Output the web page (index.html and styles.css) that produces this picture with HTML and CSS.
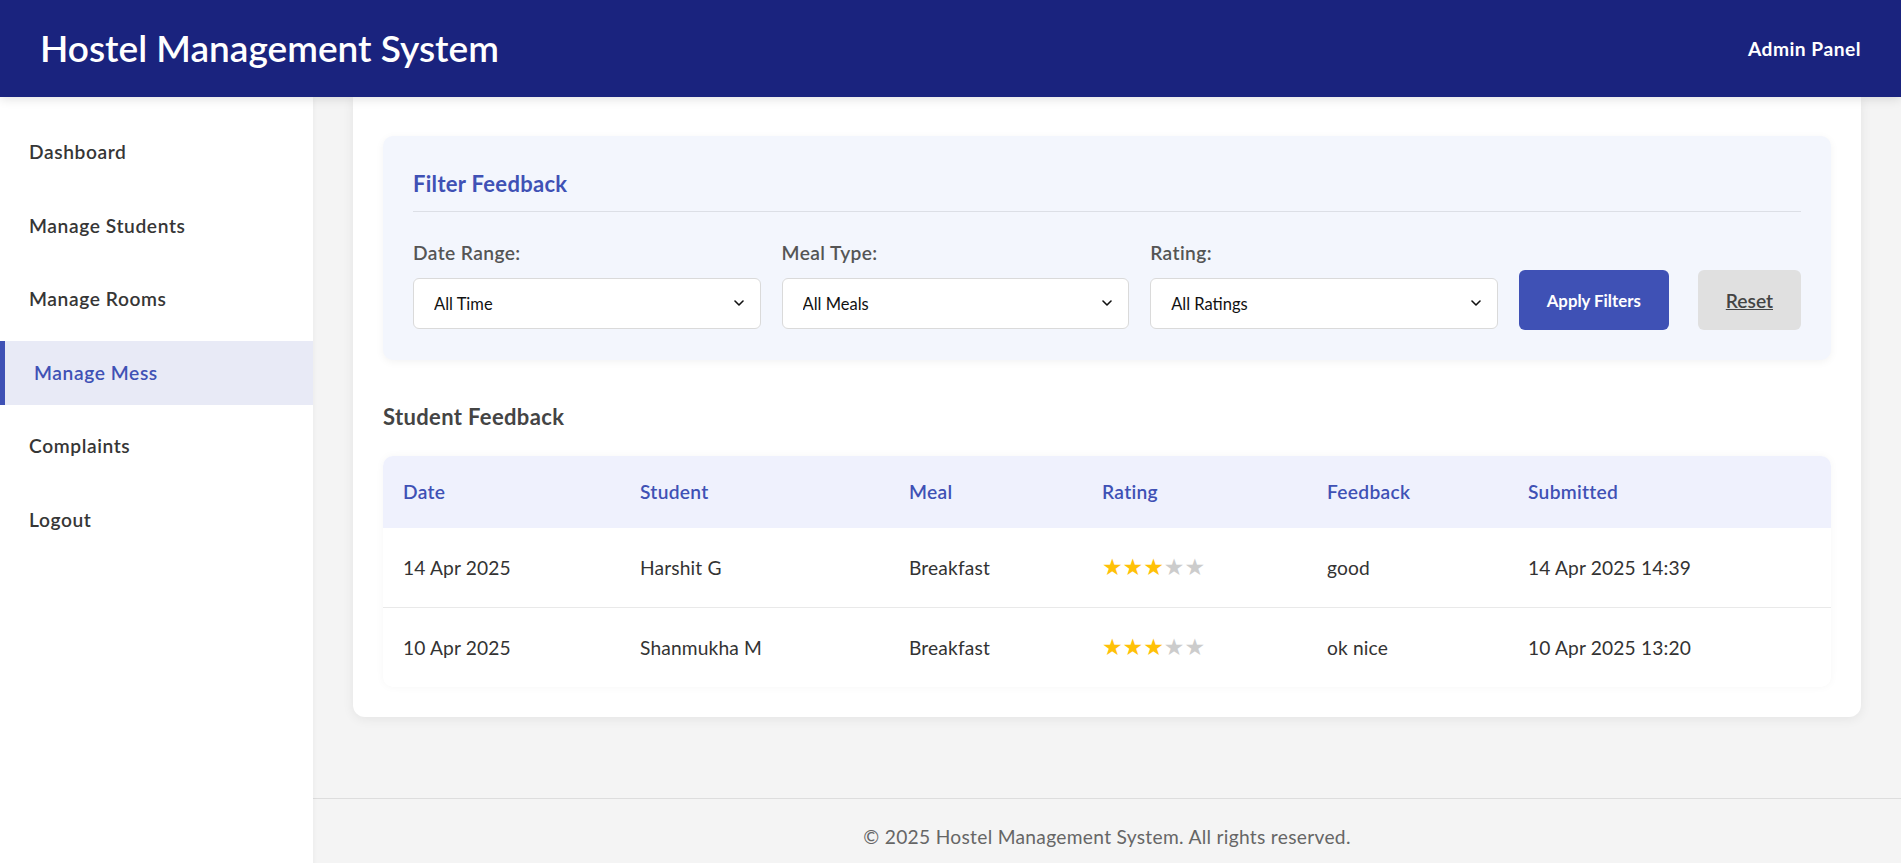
FILE: index.html
```html
<!DOCTYPE html>
<html lang="en">
<head>
<meta charset="utf-8">
<title>Manage Mess - Hostel Management System</title>
<link rel="stylesheet" href="styles.css">
</head>
<body>
<header class="topbar">
  <h1 class="brand">Hostel Management System</h1>
  <div class="role">Admin Panel</div>
</header>
<div class="layout">
  <nav class="sidebar">
    <a class="nav-item" href="#">Dashboard</a>
    <a class="nav-item" href="#">Manage Students</a>
    <a class="nav-item" href="#">Manage Rooms</a>
    <a class="nav-item active" href="#">Manage Mess</a>
    <a class="nav-item" href="#">Complaints</a>
    <a class="nav-item" href="#">Logout</a>
  </nav>
  <div class="main-col">
    <main class="content">
      <section class="card">
        <div class="filter-box">
          <h3 class="filter-title">Filter Feedback</h3>
          <div class="filter-row">
            <div class="filter-group">
              <label class="filter-label">Date Range:</label>
              <div class="select-wrap">
                <select class="select"><option>All Time</option><option>Today</option><option>This Week</option></select>
                <svg class="chev" width="10" height="6" viewBox="0 0 10 6"><path d="M1 1l4 4 4-4" fill="none" stroke="#111" stroke-width="1.6" stroke-linecap="round" stroke-linejoin="round"/></svg>
              </div>
            </div>
            <div class="filter-group">
              <label class="filter-label">Meal Type:</label>
              <div class="select-wrap">
                <select class="select"><option>All Meals</option><option>Breakfast</option><option>Lunch</option><option>Dinner</option></select>
                <svg class="chev" width="10" height="6" viewBox="0 0 10 6"><path d="M1 1l4 4 4-4" fill="none" stroke="#111" stroke-width="1.6" stroke-linecap="round" stroke-linejoin="round"/></svg>
              </div>
            </div>
            <div class="filter-group">
              <label class="filter-label">Rating:</label>
              <div class="select-wrap">
                <select class="select"><option>All Ratings</option><option>5 Stars</option><option>4 Stars</option></select>
                <svg class="chev" width="10" height="6" viewBox="0 0 10 6"><path d="M1 1l4 4 4-4" fill="none" stroke="#111" stroke-width="1.6" stroke-linecap="round" stroke-linejoin="round"/></svg>
              </div>
            </div>
            <button class="btn-apply" type="button">Apply Filters</button>
            <a class="btn-reset" href="#">Reset</a>
          </div>
        </div>

        <h3 class="section-title">Student Feedback</h3>
        <div class="table-wrap">
          <table class="fb-table">
            <colgroup>
              <col class="c-date"><col class="c-student"><col class="c-meal"><col class="c-rating"><col class="c-feedback"><col class="c-submitted">
            </colgroup>
            <thead>
              <tr><th>Date</th><th>Student</th><th>Meal</th><th>Rating</th><th>Feedback</th><th>Submitted</th></tr>
            </thead>
            <tbody>
              <tr>
                <td>14 Apr 2025</td><td>Harshit G</td><td>Breakfast</td>
                <td><span class="stars"><span class="on">★★★</span><span class="off">★★</span></span></td>
                <td>good</td><td>14 Apr 2025 14:39</td>
              </tr>
              <tr>
                <td>10 Apr 2025</td><td>Shanmukha M</td><td>Breakfast</td>
                <td><span class="stars"><span class="on">★★★</span><span class="off">★★</span></span></td>
                <td>ok nice</td><td>10 Apr 2025 13:20</td>
              </tr>
            </tbody>
          </table>
        </div>
      </section>
    </main>
    <footer class="footer">© 2025 Hostel Management System. All rights reserved.</footer>
  </div>
</div>
</body>
</html>
```
FILE: styles.css
```css
* { box-sizing: border-box; }

html, body {
  margin: 0;
  padding: 0;
}

body {
  font-family: "Lato", "Open Sans", sans-serif;
  background: #f4f4f4;
  color: #333;
  font-size: 19.2px;
}

.topbar {
  position: relative;
  z-index: 3;
  height: 97px;
  background: #1a237e;
  color: #fff;
  display: flex;
  align-items: center;
  justify-content: space-between;
  padding: 0 40px 0 40px;
  box-shadow: 0 2px 10px rgba(0, 0, 0, 0.12);
}

.brand {
  margin: 0;
  font-size: 37px;
  font-weight: 600;
  line-height: 1;
  padding-bottom: 2px;
}

.role {
  font-size: 19.2px;
  font-weight: 700;
  letter-spacing: 0.5px;
}

.layout {
  display: flex;
  align-items: stretch;
  min-height: 766px;
}

.sidebar {
  width: 313px;
  flex: 0 0 313px;
  background: #fff;
  padding-top: 23px;
  display: flex;
  flex-direction: column;
  gap: 9.6px;
  box-shadow: 1px 0 4px rgba(0, 0, 0, 0.04);
  position: relative;
  z-index: 1;
}

.nav-item {
  display: block;
  padding: 19px 20px 19px 29px;
  line-height: 26px;
  color: #363636;
  text-decoration: none;
  font-weight: 600;
  font-size: 19.2px;
  letter-spacing: 0.6px;
}

.nav-item.active {
  background: #e8eaf6;
  color: #3f51b5;
  border-left: 5px solid #3f51b5;
}

.main-col {
  flex: 1;
  display: flex;
  flex-direction: column;
}

.content {
  padding: 0 40px 81px 40px;
}

.card {
  background: #fff;
  border-radius: 0 0 12px 12px;
  padding: 39px 30px 30px 30px;
  box-shadow: 0 2px 12px rgba(0, 0, 0, 0.07);
}

.filter-box {
  background: #f3f6fd;
  border-radius: 10px;
  padding: 33px 30px 30px 30px;
  box-shadow: 0 2px 8px rgba(0, 0, 0, 0.05);
}

.filter-title {
  margin: 0 0 28px 0;
  font-size: 22px;
  line-height: 30px;
  font-weight: 700;
  color: #3f51b5;
  letter-spacing: 0.3px;
  padding-bottom: 12px;
  border-bottom: 1px solid #dcdfe6;
}

.filter-row {
  display: flex;
  align-items: flex-end;
  gap: 21px;
}

.filter-group {
  flex: 1;
  display: flex;
  flex-direction: column;
}

.filter-label {
  font-size: 19.2px;
  line-height: 26px;
  font-weight: 600;
  color: #555;
  letter-spacing: 0.4px;
  margin-bottom: 12px;
}

.select-wrap {
  position: relative;
  margin-bottom: 1px;
}

.select {
  -webkit-appearance: none;
  appearance: none;
  width: 100%;
  height: 51px;
  border: 1px solid #dadada;
  border-radius: 6px;
  background: #fff;
  padding: 0 40px 0 20px;
  font-family: "Lato", "Open Sans", sans-serif;
  font-size: 16.5px;
  color: #111;
}

.chev {
  position: absolute;
  right: 17px;
  top: 22px;
  pointer-events: none;
}

.btn-apply {
  height: 60px;
  padding: 0 28px;
  border: none;
  border-radius: 6px;
  background: #3f51b5;
  color: #fff;
  font-family: "Lato", "Open Sans", sans-serif;
  font-size: 16.8px;
  font-weight: 700;
  white-space: nowrap;
}

.btn-reset {
  margin-left: 8px;
  height: 60px;
  padding: 0 28px;
  display: flex;
  align-items: center;
  border-radius: 6px;
  background: #e0e0e0;
  color: #444;
  font-size: 19.2px;
  font-weight: 600;
  text-decoration: underline;
}

.section-title {
  margin: 42px 0 24px 0;
  font-size: 22px;
  line-height: 30px;
  font-weight: 700;
  color: #444;
  letter-spacing: 0.35px;
}

.table-wrap {
  border-radius: 10px;
  overflow: hidden;
  background: #fff;
  box-shadow: 0 0 8px rgba(0, 0, 0, 0.04);
}

.fb-table {
  width: 100%;
  border-collapse: collapse;
  table-layout: fixed;
}

.c-date { width: 237px; }
.c-student { width: 269px; }
.c-meal { width: 193px; }
.c-rating { width: 225px; }
.c-feedback { width: 201px; }

.fb-table th {
  background: #eff1fd;
  color: #3f51b5;
  font-weight: 600;
  text-align: left;
  font-size: 19.2px;
  line-height: 26px;
  padding: 23px 20px;
  letter-spacing: 0.3px;
}

.fb-table td {
  padding: 26px 20px;
  line-height: 26px;
  height: 79px;
  font-size: 19.2px;
  color: #333;
  letter-spacing: 0.15px;
}

.fb-table tbody tr:first-child td {
  border-bottom: 1px solid #e9e9e9;
}

.stars {
  font-family: "DejaVu Sans", sans-serif;
  font-size: 23px;
  line-height: 26px;
  letter-spacing: 0;
}

.stars .on { color: #ffc107; }
.stars .off { color: #ccc; }

.footer {
  border-top: 1px solid #ddd;
  padding: 25px 0;
  line-height: 26px;
  text-align: center;
  color: #666;
  font-size: 19.2px;
  letter-spacing: 0.3px;
}
```
